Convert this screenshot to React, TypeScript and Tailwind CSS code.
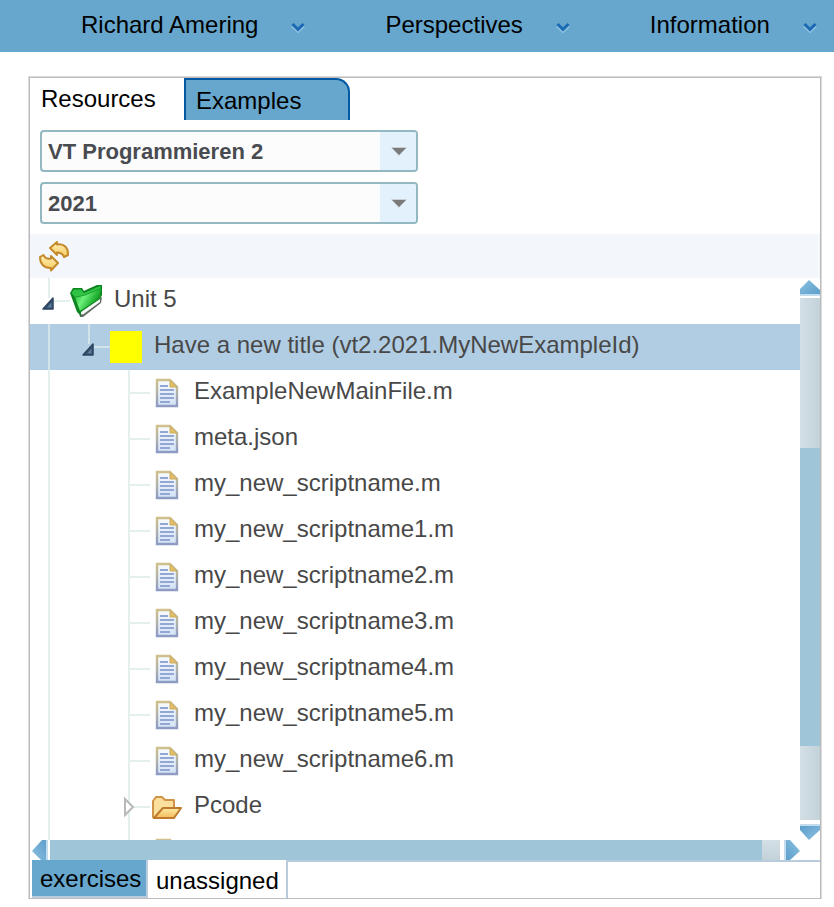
import type { ReactNode } from "react";

const menus = ["Richard Amering", "Perspectives", "Information"];

const files = [
  "ExampleNewMainFile.m",
  "meta.json",
  "my_new_scriptname.m",
  "my_new_scriptname1.m",
  "my_new_scriptname2.m",
  "my_new_scriptname3.m",
  "my_new_scriptname4.m",
  "my_new_scriptname5.m",
  "my_new_scriptname6.m",
];

function Chevron() {
  return (
    <svg width="14" height="10" viewBox="0 0 14 10" fill="none" aria-hidden="true">
      <path d="M1 3.5 L7 9 L13 3.5" stroke="#8fc0e0" strokeWidth="2" />
      <path d="M1.5 1 L7 6.5 L12.5 1" stroke="#1a6bb3" strokeWidth="3" />
    </svg>
  );
}

function RefreshIcon() {
  return (
    <svg width="32" height="32" viewBox="0 0 32 32" aria-hidden="true">
      <defs>
        <linearGradient id="gold" x1="0" y1="0" x2="0" y2="1">
          <stop offset="0" stopColor="#fff0b8" />
          <stop offset="1" stopColor="#f5c95c" />
        </linearGradient>
      </defs>
      <g fill="url(#gold)" stroke="#c48a2c" strokeWidth="2" strokeLinejoin="round">
        <path d="M12 8 L19 2 V4.5 C26 3 30.5 8 30 15 L26 17 C25 14 23 12.5 19 12.5 V15 Z" />
        <path d="M20 23 L13 30.5 V28 C6 28.5 2 24 2 17 L5.5 15 C7 18 9 19.5 13 18.5 V16 Z" />
      </g>
    </svg>
  );
}

function GreenFolder() {
  return (
    <svg width="32" height="32" viewBox="0 0 32 32" aria-hidden="true">
      <defs>
        <linearGradient id="green" x1="0" y1="0.2" x2="1" y2="0.7">
          <stop offset="0" stopColor="#22b536" />
          <stop offset="0.35" stopColor="#6df07a" />
          <stop offset="0.7" stopColor="#23b534" />
          <stop offset="1" stopColor="#0a7014" />
        </linearGradient>
      </defs>
      <path d="M9 28 L32 12 L31 18 L13 32 H10 Z" fill="#5f6b61" />
      <path d="M10 26 L30 13 L30 17 L13 29.5 L10 29 Z" fill="#f6f9f6" />
      <path d="M0 8 L3 3 L12 3 L14 6 L18 4 L27 0 H32 V10 L30 14 L11 27 L11 31 L7 27 Z" fill="#0d8420" />
      <path d="M1.5 8 L4 4.5 L11 4.5 L14 8 L30 1 L31 3 L15 10 L5 12 Z" fill="#2fc244" />
      <path d="M5 12.5 L15 10.5 L31 3.5 L30 13 L10 26 Z" fill="url(#green)" />
    </svg>
  );
}

function FileIcon() {
  return (
    <svg width="32" height="32" viewBox="0 0 32 32" aria-hidden="true">
      <defs>
        <linearGradient id="edge" x1="0" y1="0" x2="0" y2="1">
          <stop offset="0" stopColor="#cfc08c" />
          <stop offset="0.55" stopColor="#adb0ac" />
          <stop offset="1" stopColor="#8d9bc4" />
        </linearGradient>
        <linearGradient id="paper" x1="0" y1="0" x2="0" y2="1">
          <stop offset="0" stopColor="#f8fbfe" />
          <stop offset="1" stopColor="#d3e2f6" />
        </linearGradient>
      </defs>
      <path d="M7 3 H20 L27 10 V29 H7 Z" fill="url(#paper)" stroke="url(#edge)" strokeWidth="2.4" />
      <path d="M20 3 L27 10 H20 Z" fill="#e3bd66" stroke="#cdae62" strokeWidth="1" />
      <path d="M10 9 H18 M10 13 H24 M10 17 H24 M10 21 H24 M10 25 H20" stroke="#93a7d4" strokeWidth="2" />
    </svg>
  );
}

function OpenFolder() {
  return (
    <svg width="32" height="32" viewBox="0 0 32 32" aria-hidden="true">
      <defs>
        <linearGradient id="flap" x1="0" y1="0" x2="0" y2="1">
          <stop offset="0" stopColor="#fdeaa4" />
          <stop offset="1" stopColor="#f4bb5c" />
        </linearGradient>
      </defs>
      <path
        d="M3 26 V10 L6 6 H12 L15 9 H24 V17 L4 27 Z"
        fill="#fbdf9c"
        stroke="#cf9448"
        strokeWidth="2"
        strokeLinejoin="round"
      />
      <path
        d="M4 27 L13 17 H31 L24 27 Z"
        fill="url(#flap)"
        stroke="#bf7a2b"
        strokeWidth="2"
        strokeLinejoin="round"
      />
    </svg>
  );
}

type GuideKind = "none" | "line" | "open" | "branch" | "closed";

function Guide({ kind, tint }: { kind: GuideKind; tint: string }) {
  return (
    <svg className="shrink-0" width="40" height="46" viewBox="0 0 40 46" fill="none" aria-hidden="true">
      {kind === "open" && (
        <>
          <path d="M19 0 V20 M24 23 H40" stroke={tint} strokeWidth="2" />
          <path d="M13 31 L23 20 V31 Z" fill="#36506e" stroke="#2c435e" strokeWidth="1.5" strokeLinejoin="round" />
          <path d="M17 29.5 L21.5 24.5 V29.5 Z" fill="#607c9b" />
        </>
      )}
      {(kind === "line" || kind === "branch" || kind === "closed") && (
        <path d="M19 0 V46" stroke={tint} strokeWidth="2" />
      )}
      {(kind === "branch" || kind === "closed") && <path d="M20 23 H40" stroke={tint} strokeWidth="2" />}
      {kind === "closed" && <path d="M15 15 L23 23 L15 31 Z" fill="#fff" stroke="#b9b9b9" strokeWidth="2" />}
    </svg>
  );
}

function Row({
  guides,
  icon,
  label,
  selected = false,
}: {
  guides: GuideKind[];
  icon: ReactNode;
  label?: string;
  selected?: boolean;
}) {
  return (
    <li
      role="treeitem"
      aria-level={guides.length}
      aria-selected={selected}
      className={`flex h-[46px] items-center ${selected ? "bg-[#b1cde3]" : ""}`}
    >
      {guides.map((kind, i) => (
        <Guide key={i} kind={kind} tint={selected ? "#d3e3ea" : "#e4f0ed"} />
      ))}
      <span className="size-8 shrink-0">{icon}</span>
      {label && <span className="ml-3 h-[46px] leading-[42px] whitespace-nowrap text-[#484848]">{label}</span>}
    </li>
  );
}

function Combo({ label, value }: { label: string; value: string }) {
  return (
    <div className="relative h-[42px] w-[378px] max-w-full overflow-hidden rounded-[4px] border-2 border-[#93b8c2] bg-[#fcfcfc]">
      <select
        aria-label={label}
        defaultValue={value}
        className="block h-full w-full appearance-none pt-[2px] pl-[6px] text-[22px] leading-[36px] font-bold text-[#484b50] outline-none"
      >
        <option>{value}</option>
      </select>
      <span className="pointer-events-none absolute inset-y-0 right-0 flex w-9 items-center justify-center bg-[#e3f1fd] pl-[2px]">
        <svg width="16" height="9" viewBox="0 0 16 9" aria-hidden="true">
          <path d="M0 0 H16 L8 9 Z" fill="#c9cfd4" />
          <path d="M1 1 H15 L8 8 Z" fill="#7a7a7a" />
        </svg>
      </span>
    </div>
  );
}

const arrowRotation = {
  up: "",
  down: "rotate-180",
  left: "-rotate-90",
  right: "rotate-90",
};

function ScrollArrow({ direction }: { direction: keyof typeof arrowRotation }) {
  const forward = direction === "down" || direction === "right";
  return (
    <button type="button" aria-label={`Scroll ${direction}`} className="size-5 shrink-0 bg-white">
      <svg className={arrowRotation[direction]} width="20" height="20" viewBox="0 0 20 20" aria-hidden="true">
        <defs>
          <linearGradient id={`arrow-${direction}`} x1="0" y1="0" x2="1" y2="1">
            <stop offset="0" stopColor="#8cc0e0" />
            <stop offset="1" stopColor="#5d9fcc" />
          </linearGradient>
        </defs>
        <path
          d={forward ? "M0 10 L11 0 L20 10 V14 H0 Z" : "M0 11 L9 2 L20 12 V16 H0 Z"}
          fill={`url(#arrow-${direction})`}
        />
        <path d={forward ? "M0 15 H20" : "M0 17 H20"} stroke="#c3ddee" strokeWidth="2" />
      </svg>
    </button>
  );
}

export default function App() {
  return (
    <div className="font-['Liberation_Sans',Arial,sans-serif] text-[24px] text-black">
      <header className="bg-[#67a7cd]">
        <nav className="flex h-[52px] gap-20 overflow-hidden pl-[81px]">
          {menus.map((name) => (
            <button key={name} type="button" className="flex shrink-0 gap-[33px] leading-[50px] whitespace-nowrap">
              <span>{name}</span>
              <span className="pt-[23px]">
                <Chevron />
              </span>
            </button>
          ))}
        </nav>
      </header>

      <main className="pt-[25px] pr-[13px] pl-[29px]">
        <section className="border border-[#bcbcbc] shadow-[0_0_0_1px_#dadada]">
          <div role="tablist" className="flex h-[42px]">
            <button type="button" role="tab" aria-selected="true" className="w-[154px] pl-[11px] text-left leading-[42px]">
              Resources
            </button>
            <button
              type="button"
              role="tab"
              aria-selected="false"
              className="w-[166px] rounded-tr-[14px] border-x-2 border-t-2 border-[#0059a0] bg-[#67a7cd] pl-[10px] text-left leading-[42px]"
            >
              Examples
            </button>
          </div>

          <div className="flex flex-col gap-[10px] p-[10px]">
            <Combo label="Course" value="VT Programmieren 2" />
            <Combo label="Year" value="2021" />
          </div>

          <div className="flex h-11 items-center bg-[#f3f7fc] pl-2">
            <button type="button" aria-label="Refresh">
              <RefreshIcon />
            </button>
          </div>

          <div className="flex h-[562px]">
            <ul role="tree" aria-label="Examples" className="min-w-0 flex-1 overflow-hidden">
              <Row guides={["open"]} icon={<GreenFolder />} label="Unit 5" />
              <Row
                guides={["line", "open"]}
                icon={<span className="block size-8 bg-[#ffff00]" />}
                label="Have a new title (vt2.2021.MyNewExampleId)"
                selected
              />
              {files.map((name) => (
                <Row key={name} guides={["line", "none", "branch"]} icon={<FileIcon />} label={name} />
              ))}
              <Row guides={["line", "none", "closed"]} icon={<OpenFolder />} label="Pcode" />
              <Row guides={["line", "none", "branch"]} icon={<FileIcon />} />
            </ul>
            <div className="flex w-5 shrink-0 flex-col">
              <ScrollArrow direction="up" />
              <div className="flex flex-1 flex-col bg-linear-to-r from-[#d3e0e6] to-[#c3d1d9]">
                <div className="grow-[150]" />
                <div className="grow-[298] bg-[#9fc5d9]" />
                <div className="grow-[74]" />
              </div>
              <ScrollArrow direction="down" />
            </div>
          </div>

          <div className="flex h-5 pr-5">
            <ScrollArrow direction="left" />
            <div className="flex flex-1 bg-linear-to-b from-[#d3e0e6] to-[#c3d1d9]">
              <div className="grow-[712] bg-[#9fc5d9]" />
              <div className="grow-[18]" />
            </div>
            <ScrollArrow direction="right" />
          </div>

          <div role="tablist" className="flex h-[38px] pl-[2px]">
            <button
              type="button"
              role="tab"
              aria-selected="false"
              className="w-[116px] border-r-2 border-b-2 border-[#b9cbdd] bg-[#67a7cd] pl-2 text-left leading-[38px]"
            >
              exercises
            </button>
            <button
              type="button"
              role="tab"
              aria-selected="true"
              className="w-[140px] border-r-2 border-[#b9cbdd] pl-2 text-left leading-[42px]"
            >
              unassigned
            </button>
            <div className="flex-1 border-t-2 border-[#b9cbdd]" />
          </div>
        </section>
      </main>
    </div>
  );
}
